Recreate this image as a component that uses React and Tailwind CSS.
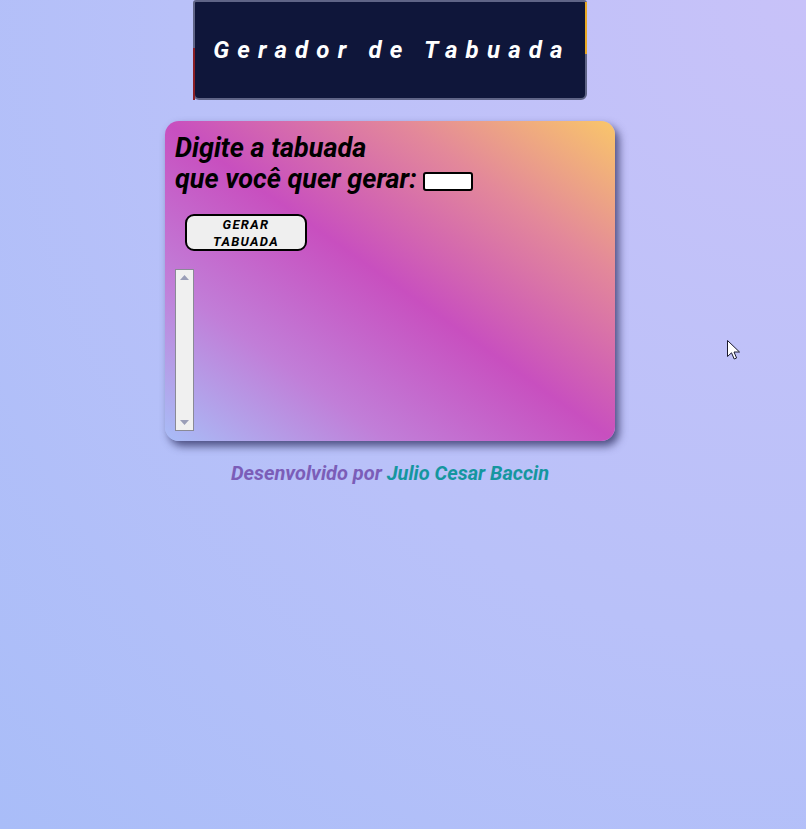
import React from 'react';

const App = () => {
    return (
        <div
            className="relative min-h-[829px] w-full overflow-hidden bg-[radial-gradient(ellipse_at_top_right,#c8c2f9_0%,#b9c1f9_55%,#a9bdf8_100%)]"
            style={{ fontFamily: 'Roboto, "Liberation Sans", sans-serif' }}
        >
            <div className="flex w-[780px] flex-col items-center">
                {/* header */}
                <div className="relative flex h-[100px] w-[394px] items-center justify-center rounded-b-[6px] rounded-t-[3px] border-2 border-[#5f6486] bg-[#0f163a]">
                    <span className="absolute left-[-2px] top-[46px] h-[52px] w-[2px] bg-[#8a1f25]" />
                    <span className="absolute right-[-2px] top-0 h-[52px] w-[2px] bg-[#e8a824]" />
                    <h1 className="pl-[4px] text-[24px] font-bold italic tracking-[8.2px] text-white">Gerador de Tabuada</h1>
                </div>

                {/* card */}
                <div className="mt-[21px] h-[320px] w-[450px] rounded-[14px] bg-[linear-gradient(to_top_right,#a8bdf7_0%,#c17ed8_25%,#c84fbf_50%,#e3889a_76%,#f9c66a_100%)] px-[10px] pt-[12px] shadow-[4px_5px_8px_rgba(40,40,90,0.75)]">
                    <p className="text-[27px] font-bold italic leading-[31px] text-black">
                        Digite a tabuada
                        <br />
                        que você quer gerar:{' '}
                        <span className="inline-block h-[19px] w-[50px] translate-y-[1px] rounded-[3px] border-2 border-black bg-white align-middle" />
                    </p>
                    <div className="mt-[19px] pl-[10px]">
                        <button className="flex h-[37px] w-[122px] flex-col items-center justify-center rounded-[9px] border-2 border-black bg-[#efefef] text-[13px] font-bold italic leading-[17px] tracking-[1.3px] text-black">
                            <span>GERAR</span>
                            <span>TABUADA</span>
                        </button>
                    </div>
                    <div className="mt-[18px] flex h-[162px] w-[19px] flex-col items-center justify-between border border-[#8a8a96] bg-[#f0f0f0] py-[5px]">
                        <svg width="9" height="5" viewBox="0 0 9 5"><path d="M4.5 0L9 5H0z" fill="#9a9eb8" /></svg>
                        <svg width="9" height="5" viewBox="0 0 9 5"><path d="M0 0h9L4.5 5z" fill="#9a9eb8" /></svg>
                    </div>
                </div>

                {/* footer */}
                <p className="mt-[17px] text-[20px] font-bold italic">
                    <span className="text-[#7b5db8]">Desenvolvido por </span>
                    <span className="text-[#15969f]">Julio Cesar Baccin</span>
                </p>
            </div>

            {/* mouse pointer */}
            <svg className="absolute left-[727px] top-[340px]" width="13" height="20" viewBox="0 0 13 20">
                <path d="M0.5 0.5V16.5L4.5 12.8L7.2 19L9.6 18L7 12H12.5Z" fill="#ffffff" stroke="#1a1a2e" strokeWidth="1" />
            </svg>
        </div>
    );
};

export default App;
